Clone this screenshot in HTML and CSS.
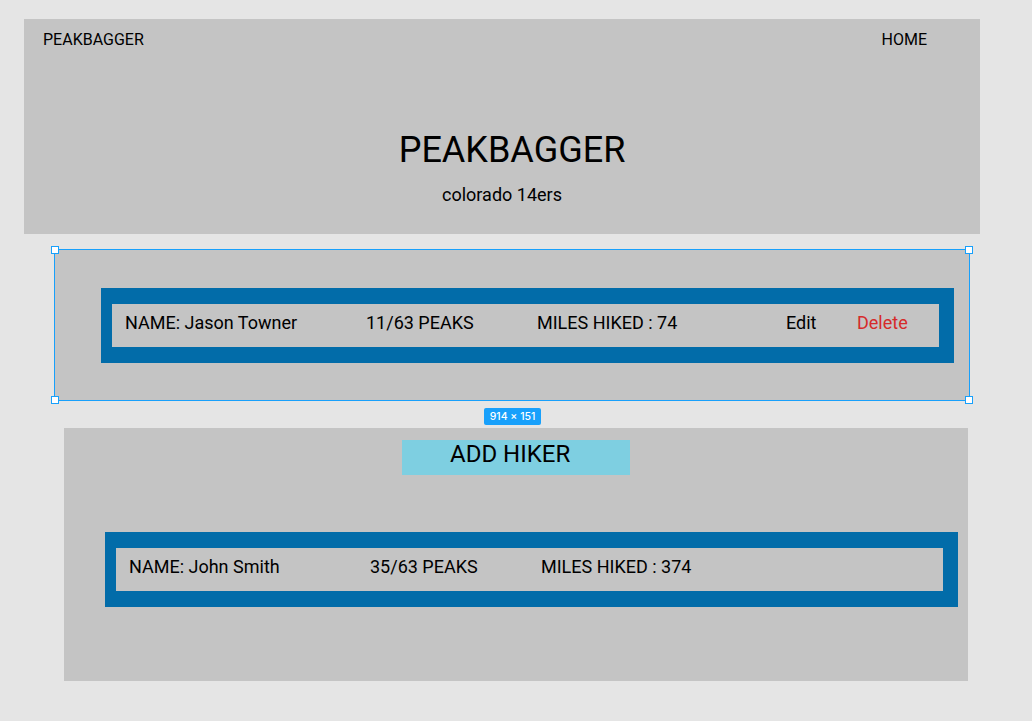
FILE: index.html
```html
<!DOCTYPE html>
<html>
<head>
<meta charset="utf-8">
<link rel="stylesheet" href="styles.css">
</head>
<body>
<div class="page">
  <header class="hero">
    <nav class="nav">
      <span class="brand">PEAKBAGGER</span>
      <span class="home">HOME</span>
    </nav>
    <h1 class="title">PEAKBAGGER</h1>
    <p class="subtitle">colorado 14ers</p>
  </header>

  <section class="selected">
    <span class="handle tl"></span>
    <span class="handle tr"></span>
    <span class="handle bl"></span>
    <span class="handle br"></span>
    <div class="row">
      <span>NAME: Jason Towner</span>
      <span>11/63 PEAKS</span>
      <span>MILES HIKED : 74</span>
      <span>Edit</span>
      <span class="delete">Delete</span>
    </div>
    <span class="badge">914 × 151</span>
  </section>

  <section class="panel">
    <div class="add">ADD HIKER</div>
    <div class="row row2">
      <span>NAME: John Smith</span>
      <span>35/63 PEAKS</span>
      <span>MILES HIKED : 374</span>
    </div>
  </section>
</div>
</body>
</html>
```

FILE: styles.css
```css
* { box-sizing: border-box; }
html, body { margin: 0; padding: 0; }
body {
  background: #e5e5e5;
  font-family: Roboto, "Liberation Sans", sans-serif;
  color: #000;
  width: 1032px;
  height: 721px;
  overflow: hidden;
}
.page {
  padding: 19px 0 0 24px;
}
.hero {
  width: 956px;
  height: 215px;
  background: #c4c4c4;
  display: flex;
  flex-direction: column;
  align-items: center;
}
.nav {
  width: 100%;
  display: flex;
  justify-content: space-between;
  padding: 12px 53px 0 19px;
  font-size: 16px;
  line-height: 17px;
}
.title {
  margin: 82px 0 0 20px;
  font-weight: 400;
  font-size: 36px;
  line-height: 40px;
}
.subtitle {
  margin: 15px 0 0 0;
  font-size: 18px;
  line-height: 20px;
}
.selected {
  position: relative;
  margin: 15px 0 0 30px;
  width: 916px;
  height: 152px;
  background: #c4c4c4;
  border: 1px solid #18a0fb;
  padding: 38px 0 0 46px;
}
.handle {
  position: absolute;
  width: 8px;
  height: 8px;
  background: #fff;
  border: 1px solid #18a0fb;
}
.handle.tl { left: -4px; top: -4px; }
.handle.tr { right: -4px; top: -4px; }
.handle.bl { left: -4px; bottom: -4px; }
.handle.br { right: -4px; bottom: -4px; }
.badge {
  position: absolute;
  left: 429px;
  top: 158px;
  width: 57px;
  height: 17px;
  background: #18a0fb;
  color: #fff;
  border-radius: 2px;
  font-size: 10.5px;
  font-weight: 500;
  line-height: 17px;
  text-align: center;
  font-family: Inter, Roboto, sans-serif;
}
.row {
  width: 853px;
  height: 75px;
  border-style: solid;
  border-color: #026ca9;
  border-width: 16px 15px 16px 11px;
  background: #c4c4c4;
  display: grid;
  grid-template-columns: 241px 171px 249px 71px auto;
  align-items: center;
  padding: 0 0 5px 13px;
  font-size: 18px;
  line-height: 20px;
}
.delete { color: #d62a2a; }
.panel {
  margin: 27px 0 0 40px;
  width: 904px;
  height: 253px;
  background: #c4c4c4;
  padding: 12px 0 0 0;
}
.add {
  margin-left: 338px;
  width: 228px;
  height: 35px;
  background: #7ecfe1;
  font-size: 24px;
  line-height: 28px;
  padding: 0 0 0 48px;
}
.row2 {
  margin: 57px 0 0 41px;
}
```
